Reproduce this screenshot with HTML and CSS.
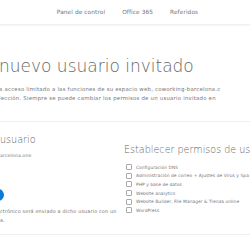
FILE: index.html
```html
<!DOCTYPE html>
<html>
<head>
    <title>Nuevo usuario invitado</title>
    <link rel="stylesheet" href="styles.css">
</head>
<body>
    <div class="topbar">
        <a class="nav-link" href="#">Panel <span class="accent">de</span> control</a>
        <a class="nav-link" href="#">Office 365</a>
        <a class="nav-link" href="#">Referidos</a>
    </div>

    <div class="page">
        <h1 class="title">nuevo usuario invitado</h1>
        <p class="intro">a acceso limitado a las funciones de su espacio web, coworking-barcelona.c<br>
        lección. Siempre se puede cambiar los permisos de un usuario invitado en</p>

        <div class="card">
            <div class="col-left">
                <h2 class="card-title">usuario</h2>
                <div class="domain">arcelona.one</div>
                <div class="btn-round"></div>
                <p class="note">ctrónico será enviado a dicho usuario con un<br>a.</p>
            </div>
            <div class="col-right">
                <h2 class="card-title">Establecer permisos de us</h2>
                <ul class="perms">
                    <li><span class="box"></span>Configuración DNS</li>
                    <li><span class="box"></span>Administración de correo + Ajustes de Virus y Spa</li>
                    <li><span class="box"></span>PHP y base de datos</li>
                    <li><span class="box"></span>Website analytics</li>
                    <li><span class="box"></span>Website Builder, File Manager &amp; Tienda online</li>
                    <li><span class="box"></span>WordPress</li>
                </ul>
            </div>
        </div>
    </div>
</body>
</html>
```

FILE: styles.css
```css
body {
    margin: 0;
    width: 250px;
    height: 250px;
    overflow: hidden;
    background: #fff;
    font-family: "DejaVu Sans", sans-serif;
    color: #777;
}
.topbar {
    height: 24px;
    display: flex;
    align-items: center;
    justify-content: center;
    gap: 17px;
    padding-left: 5px;
    border-bottom: 1px solid #f0f0f0;
    box-shadow: 0 1px 2px rgba(0,0,0,0.04);
}
.nav-link {
    font-size: 5.8px;
    letter-spacing: 0.1px;
    color: #777;
    text-decoration: none;
    white-space: nowrap;
}
.accent {
    color: #1e7fd6;
}
.page {
    padding-top: 30px;
}
.title {
    margin: 0 0 0 -1px;
    font-size: 17px;
    font-weight: 300;
    color: #666;
    line-height: 22px;
    white-space: nowrap;
}
.intro {
    margin: 8px 0 0 -1px;
    font-size: 5.4px;
    letter-spacing: 0.22px;
    line-height: 9px;
    color: #777;
    white-space: nowrap;
}
.card {
    margin-top: 18px;
    border-top: 1px solid #eee;
    border-bottom: 1px solid #eee;
    height: 112px;
    display: grid;
    grid-template-columns: 124px 1fr;
}
.card-title {
    margin: 0;
    font-size: 9.6px;
    font-weight: 300;
    color: #666;
    white-space: nowrap;
}
.col-left {
    padding-top: 12px;
}
.col-right {
    padding-top: 22px;
}
.domain {
    margin-top: 8px;
    font-size: 4.6px;
    letter-spacing: 0.15px;
    color: #777;
}
.btn-round {
    margin: 31px 0 0 -8px;
    width: 12px;
    height: 12px;
    border-radius: 50%;
    background: #0a7bd9;
}
.note {
    margin: 6px 0 0;
    font-size: 4.9px;
    letter-spacing: 0.15px;
    line-height: 9px;
    color: #777;
    white-space: nowrap;
}
.perms {
    list-style: none;
    margin: 8px 0 0 2px;
    padding: 0;
}
.perms li {
    display: flex;
    align-items: center;
    gap: 4px;
    height: 8.6px;
    font-size: 4.4px;
    letter-spacing: 0.05px;
    color: #777;
    white-space: nowrap;
}
.box {
    width: 4px;
    height: 4px;
    border: 0.6px solid #aaa;
    border-radius: 1px;
    flex: none;
}
```
